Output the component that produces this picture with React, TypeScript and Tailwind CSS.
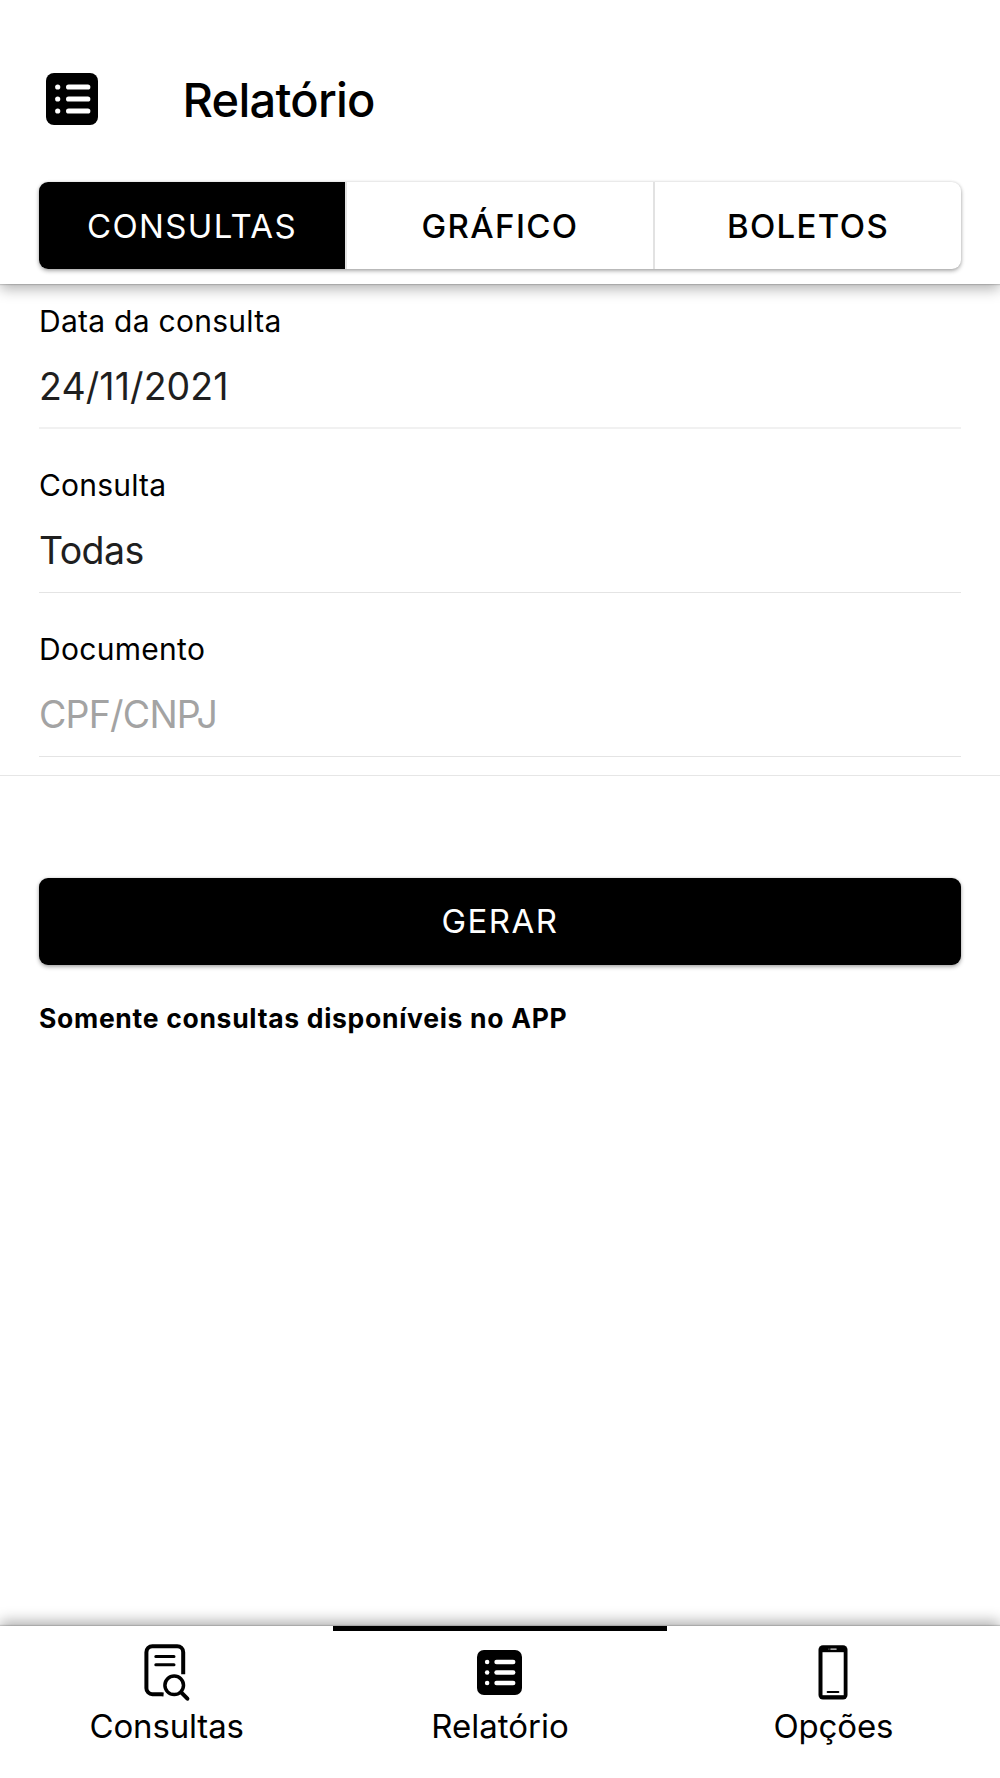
import React, { useState } from 'react';

const tabs = ['CONSULTAS', 'GRÁFICO', 'BOLETOS'];

function ListIcon({ className }: { className?: string }) {
  return (
    <svg viewBox="0 0 52 52" className={className}>
      <rect width="52" height="52" rx="8" fill="#000" />
      {[14, 26, 38].map((y) => (
        <g key={y}>
          <circle cx="11.7" cy={y} r="2.6" fill="#fff" />
          <rect x="20" y={y - 2.6} width="24.4" height="5.2" rx="2.6" fill="#fff" />
        </g>
      ))}
    </svg>
  );
}

function SearchDocIcon() {
  return (
    <svg viewBox="0 0 48 60" className="h-[60px] w-12" fill="none" stroke="#000" strokeLinecap="round">
      <path
        d="M20.6 51.4l-2.2-.2H9.4a6 6 0 0 1-6-6V9.2a6 6 0 0 1 6-6h24.8a6 6 0 0 1 6 6v22"
        strokeWidth="4"
        strokeLinecap="butt"
        strokeLinejoin="round"
      />
      <path d="M12.8 13.4h18.2M12.8 21.8h18.2" strokeWidth="3" />
      <circle cx="31.2" cy="42.3" r="9.3" strokeWidth="3.5" />
      <path d="M38.2 49.3l6.2 6.4" strokeWidth="4" />
    </svg>
  );
}

function PhoneIcon() {
  return (
    <svg viewBox="0 0 30 55" className="h-[55px] w-[30px]">
      <rect x="0.5" y="0.3" width="29" height="54.2" rx="4.5" fill="#000" />
      <rect x="4.5" y="7.2" width="21.2" height="43" fill="#fff" />
      <rect x="12.2" y="3.4" width="6.6" height="1.4" rx="0.7" fill="#ddd" />
      <circle cx="10.9" cy="4.1" r="0.6" fill="#888" />
      <rect x="8.6" y="46" width="12.8" height="2" rx="1" fill="#000" />
    </svg>
  );
}

export default function App() {
  const [tab, setTab] = useState('CONSULTAS');
  const [documento, setDocumento] = useState('');

  return (
    <div className="flex h-[1778px] w-full flex-col overflow-hidden bg-white font-['Inter',sans-serif] text-black">
      <header className="h-[284px] shrink-0 px-[39px] pt-[72px] shadow-[0_1px_1px_rgba(0,0,0,0.14),0_5px_13px_rgba(0,0,0,0.3)]">
        <div className="flex h-[110px] items-start pl-[6.5px]">
          <ListIcon className="mt-[0.6px] size-[52px]" />
          <h1 className="ml-[85px] text-[47px] leading-[56px] font-medium tracking-[-0.75px]">Relatório</h1>
        </div>
        <div className="flex h-[87px] rounded-[9px] bg-white shadow-[0_2px_4px_rgba(0,0,0,0.32),0_0_3px_rgba(0,0,0,0.12)]">
          {tabs.map((name) => (
            <button
              key={name}
              onClick={() => setTab(name)}
              className={`flex-1 border-r-2 border-[#e2e2e2] pt-0.5 text-[33px] tracking-[1.35px] first:rounded-l-[9px] last:rounded-r-[9px] last:border-r-0 ${
                tab === name ? 'bg-black text-white' : 'font-medium'
              }`}
            >
              {name}
            </button>
          ))}
        </div>
      </header>

      <main className="flex-1">
        <section className="h-[492px] border-b-[1.5px] border-[#e6e6e6] px-[39px] pt-[19px]">
          <div className="h-[126px] border-b-2 border-[#f1f1f1]">
            <label className="block text-[30px] leading-[36px] tracking-[0.27px]">Data da consulta</label>
            <p className="mt-6 text-[37.5px] leading-[48px] tracking-[0.1px] text-[#1f1f1f]">24/11/2021</p>
          </div>
          <div className="mt-[38px] h-[126px] border-b border-[#e4e4e4]">
            <label className="block text-[30px] leading-[36px] tracking-[0.2px]">Consulta</label>
            <p className="mt-6 text-[37.5px] leading-[48px] tracking-[-0.57px] text-[#1f1f1f]">Todas</p>
          </div>
          <div className="mt-[38px] h-[126px] border-b border-[#e4e4e4]">
            <label className="block text-[30px] leading-[36px] tracking-[0.3px]">Documento</label>
            <input
              value={documento}
              onChange={(e) => setDocumento(e.target.value)}
              placeholder="CPF/CNPJ"
              className="mt-6 block h-12 w-full text-[37.5px] tracking-[-0.8px] text-[#1f1f1f] outline-none placeholder:text-[#a3a3a3]"
            />
          </div>
        </section>

        <div className="px-[39px] pt-[102px]">
          <button className="h-[87px] w-full rounded-[9px] bg-black text-[33px] tracking-[1.5px] text-white shadow-[0_2px_4px_rgba(0,0,0,0.32),0_0_3px_rgba(0,0,0,0.12)]">
            GERAR
          </button>
          <p className="mt-[37px] text-[26.5px] leading-8 font-bold tracking-[0.7px]">
            Somente consultas disponíveis no APP
          </p>
        </div>
      </main>

      <nav className="grid h-[152px] shrink-0 grid-cols-3 bg-white shadow-[0_-1px_1px_rgba(0,0,0,0.14),0_-5px_13px_rgba(0,0,0,0.3)]">
        <a className="flex flex-col items-center">
          <div className="flex h-20 items-start pt-[17px]">
            <SearchDocIcon />
          </div>
          <span className="text-[33px] leading-[40px] tracking-[-0.16px]">Consultas</span>
        </a>
        <a className="flex flex-col items-center border-t-[5px] border-black">
          <div className="flex h-[75px] items-start pt-[19px]">
            <ListIcon className="size-[45px]" />
          </div>
          <span className="text-[33px] leading-[40px]">Relatório</span>
        </a>
        <a className="flex flex-col items-center">
          <div className="flex h-20 items-start pt-[19px]">
            <PhoneIcon />
          </div>
          <span className="text-[33px] leading-[40px] tracking-[-0.16px]">Opções</span>
        </a>
      </nav>
    </div>
  );
}
